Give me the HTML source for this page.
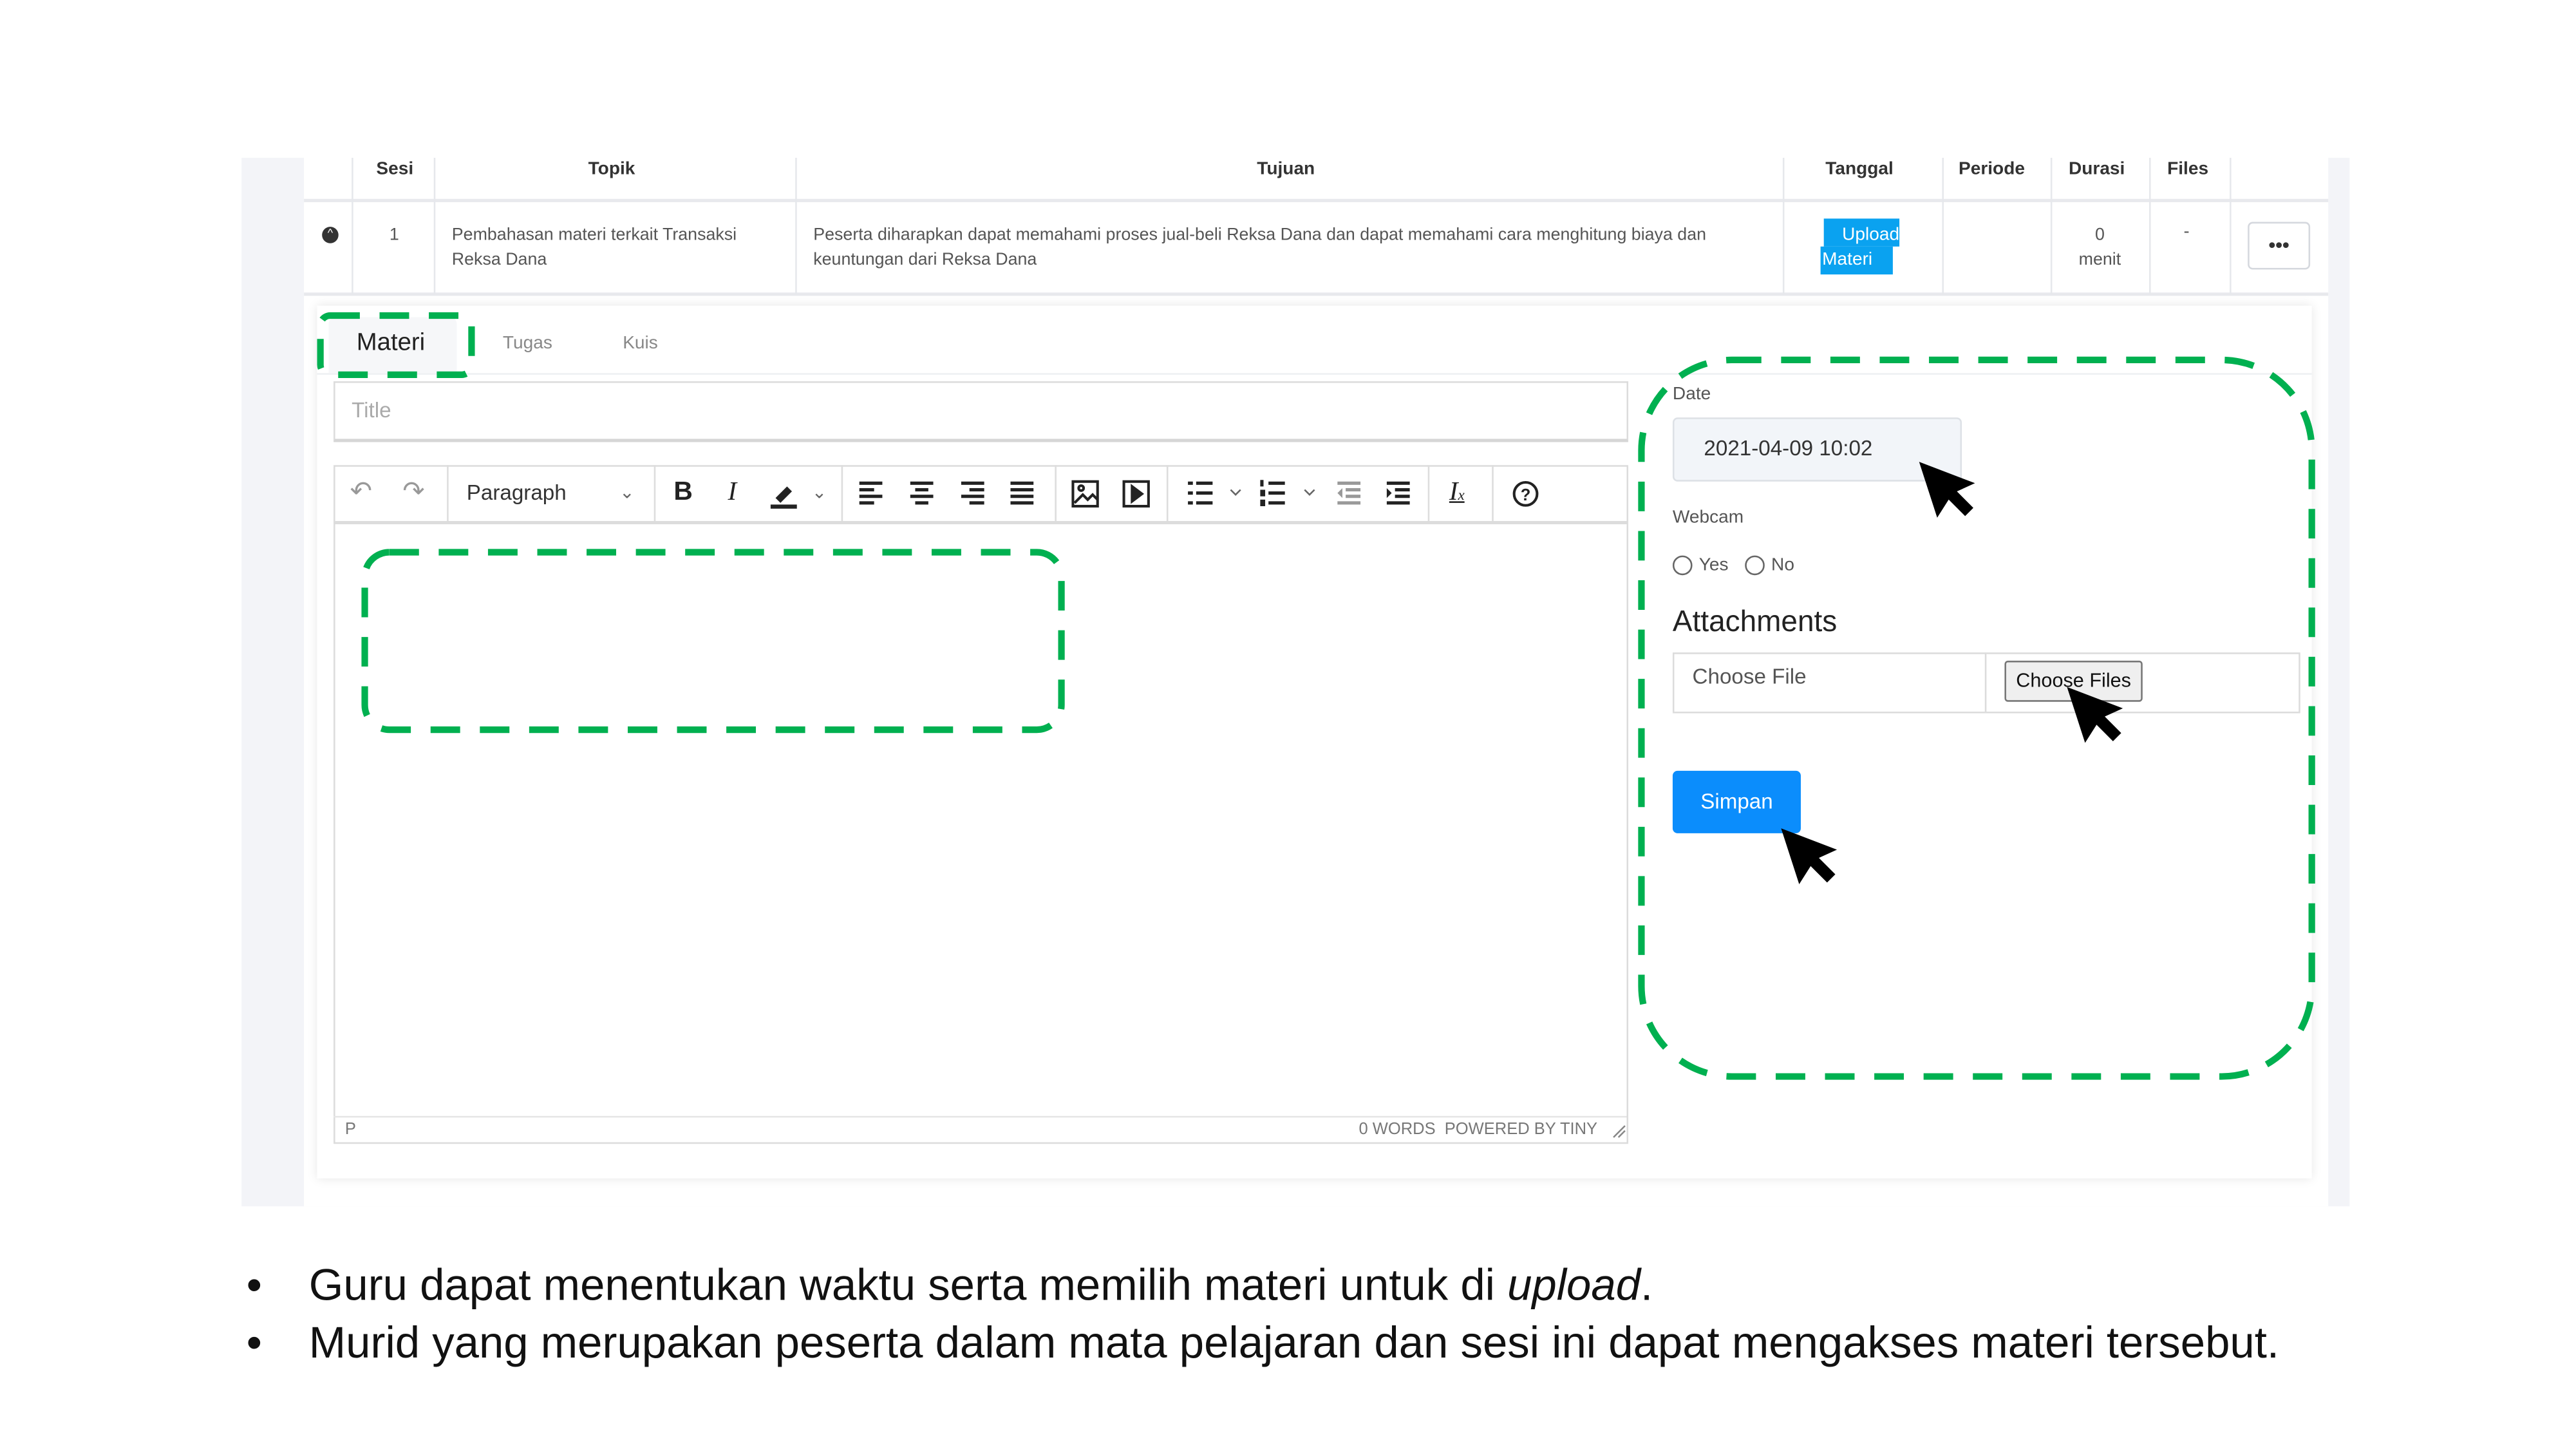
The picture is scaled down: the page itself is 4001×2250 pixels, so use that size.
<!DOCTYPE html>
<html><head><meta charset="utf-8"><style>
html,body{margin:0;padding:0;background:#fff;width:4001px;height:2250px;overflow:hidden}
#w{position:absolute;left:0;top:0;width:1560px;height:877px;transform:scale(2.552);transform-origin:0 0;font-family:"Liberation Sans",sans-serif;color:#333}
.a{position:absolute}
.th{position:absolute;top:96px;font-size:11px;font-weight:bold;color:#333;line-height:12px;padding-top:1px}
.vl{position:absolute;width:1px;background:#e6e8ec}
.t{font-size:10.5px;color:#555;line-height:15px}
.tb{position:absolute;top:283px;height:34px;font-size:16px;color:#222;line-height:34px}
.sep{position:absolute;top:283px;height:34px;width:1px;background:#ddd}
</style></head><body><div id="w">
<div class="a" style="left:147px;top:96px;width:1283px;height:638px;background:#f3f4f8"></div>
<div class="a" style="left:185px;top:96px;width:1232px;height:638px;background:#fff"></div>
<div class="a" style="left:185px;top:121px;width:1232px;height:2px;background:#e8e9ed"></div>
<div class="a" style="left:185px;top:178px;width:1232px;height:2px;background:#e8e9ed"></div>
<div class="vl" style="left:214px;top:96px;height:83px"></div>
<div class="vl" style="left:264px;top:96px;height:83px"></div>
<div class="vl" style="left:484px;top:96px;height:83px"></div>
<div class="vl" style="left:1085px;top:96px;height:83px"></div>
<div class="vl" style="left:1182px;top:96px;height:83px"></div>
<div class="vl" style="left:1248px;top:96px;height:83px"></div>
<div class="vl" style="left:1308px;top:96px;height:83px"></div>
<div class="vl" style="left:1357px;top:96px;height:83px"></div>
<div class="th" style="left:229px">Sesi</div>
<div class="th" style="left:358px">Topik</div>
<div class="th" style="left:765px">Tujuan</div>
<div class="th" style="left:1111px">Tanggal</div>
<div class="th" style="left:1192px">Periode</div>
<div class="th" style="left:1259px">Durasi</div>
<div class="th" style="left:1319px">Files</div>
<div class="a" style="left:196px;top:138px;width:10px;height:10px;border-radius:50%;background:#333;color:#fff;font-size:7px;line-height:10px;text-align:center">^</div>
<div class="a t" style="left:237px;top:136px">1</div>
<div class="a t" style="left:275px;top:136px;width:200px">Pembahasan materi terkait Transaksi Reksa Dana</div>
<div class="a t" style="left:495px;top:136px;width:580px">Peserta diharapkan dapat memahami proses jual-beli Reksa Dana dan dapat memahami cara menghitung biaya dan keuntungan dari Reksa Dana</div>
<div class="a" style="left:1110px;top:133px;width:46px;height:17px;background:#0aa2f0"></div>
<div class="a" style="left:1108px;top:150px;width:44px;height:17px;background:#0aa2f0"></div>
<div class="a" style="left:1110px;top:136px;font-size:11px;color:#fff;line-height:15px;width:46px;text-align:right">Upload</div>
<div class="a" style="left:1109px;top:151px;font-size:11px;color:#fff;line-height:15px">Materi</div>
<div class="a t" style="left:1263px;top:136px;width:30px;text-align:center">0<br>menit</div>
<div class="a t" style="left:1329px;top:134px">-</div>
<div class="a" style="left:1368px;top:135px;width:36px;height:27px;border:1px solid #d5d8de;border-radius:3px;font-size:12px;text-align:center;line-height:27px;font-weight:bold;color:#333">•••</div>
<div class="a" style="left:193px;top:186px;width:1214px;height:531px;background:#fff;box-shadow:0 0 6px rgba(0,0,0,.10)"></div>
<div class="a" style="left:193px;top:227px;width:1214px;height:1px;background:#eef0f3"></div>
<div class="a" style="left:200px;top:193px;width:78px;height:34px;background:#f6f7f9;border-radius:4px 4px 0 0"></div>
<div class="a" style="left:217px;top:200px;font-size:15px;color:#222">Materi</div>
<div class="a" style="left:306px;top:203px;font-size:11px;color:#888">Tugas</div>
<div class="a" style="left:379px;top:203px;font-size:11px;color:#888">Kuis</div>
<div class="a" style="left:203px;top:232px;width:786px;height:34px;border:1px solid #dcdcdc;border-bottom:2px solid #d6d6d6"></div>
<div class="a" style="left:214px;top:242px;font-size:13px;color:#aaa">Title</div>
<div class="a" style="left:203px;top:283px;width:786px;height:411px;border:1px solid #dcdcdc"></div>
<div class="a" style="left:203px;top:317px;width:787px;height:2px;background:#dcdcdc"></div>
<div class="a" style="left:203px;top:679px;width:787px;height:1px;background:#e5e5e5"></div>
<div class="a" style="left:210px;top:682px;font-size:10px;color:#777">P</div>
<div class="a" style="left:827px;top:682px;font-size:10px;color:#777">0 WORDS &nbsp;POWERED BY TINY</div>
<div class="sep" style="left:272px"></div><div class="sep" style="left:398px"></div><div class="sep" style="left:512px"></div><div class="sep" style="left:642px"></div><div class="sep" style="left:710px"></div><div class="sep" style="left:869px"></div><div class="sep" style="left:908px"></div>
<div class="tb" style="left:213px;color:#999">↶</div>
<div class="tb" style="left:245px;color:#999">↷</div>
<div class="tb" style="left:284px;font-size:13px;color:#333">Paragraph</div>
<div class="tb" style="left:377px;font-size:11px;color:#666">⌄</div>
<div class="tb" style="left:410px;font-weight:bold">B</div>
<div class="tb" style="left:443px;font-family:'Liberation Serif',serif;font-style:italic">I</div>
<svg class="a" style="left:468px;top:292px" width="18" height="18"><path d="M4 11 L11 4 L14 7 L7 14 Z" fill="#222"/><rect x="1" y="15" width="16" height="2.5" fill="#222"/></svg>
<div class="tb" style="left:494px;font-size:11px;color:#666">⌄</div>
<svg class="a" style="left:522px;top:292px" width="110" height="16" fill="#222">
<rect x="1" y="1" width="14" height="2"/><rect x="1" y="5" width="9" height="2"/><rect x="1" y="9" width="14" height="2"/><rect x="1" y="13" width="9" height="2"/>
<rect x="32" y="1" width="14" height="2"/><rect x="35" y="5" width="8" height="2"/><rect x="32" y="9" width="14" height="2"/><rect x="35" y="13" width="8" height="2"/>
<rect x="63" y="1" width="14" height="2"/><rect x="68" y="5" width="9" height="2"/><rect x="63" y="9" width="14" height="2"/><rect x="68" y="13" width="9" height="2"/>
<rect x="93" y="1" width="14" height="2"/><rect x="93" y="5" width="14" height="2"/><rect x="93" y="9" width="14" height="2"/><rect x="93" y="13" width="14" height="2"/></svg>
<svg class="a" style="left:652px;top:292px" width="50" height="17" fill="none" stroke="#222" stroke-width="1.6"><rect x="1" y="1" width="15" height="15"/><path d="M2 14 L7 9 L10 12 L13 9 L16 12"/><circle cx="6" cy="5" r="1.5"/><rect x="32" y="1" width="15" height="15"/><path d="M37 4 L43 8.5 L37 13 Z" fill="#222"/></svg>
<svg class="a" style="left:722px;top:292px" width="140" height="16" fill="#222">
<rect x="1" y="1" width="3" height="2"/><rect x="6" y="1" width="10" height="2"/><rect x="1" y="7" width="3" height="2"/><rect x="6" y="7" width="10" height="2"/><rect x="1" y="13" width="3" height="2"/><rect x="6" y="13" width="10" height="2"/>
<path d="M27 6 L30 9 L33 6" stroke="#666" fill="none"/>
<rect x="45" y="0" width="2" height="4"/><rect x="50" y="1" width="10" height="2"/><rect x="45" y="6" width="3" height="4"/><rect x="50" y="7" width="10" height="2"/><rect x="45" y="12" width="3" height="4"/><rect x="50" y="13" width="10" height="2"/>
<path d="M72 6 L75 9 L78 6" stroke="#666" fill="none"/>
<g fill="#999"><rect x="92" y="1" width="14" height="2"/><rect x="97" y="5" width="9" height="2"/><rect x="97" y="9" width="9" height="2"/><rect x="92" y="13" width="14" height="2"/><path d="M95 5 L92 8 L95 11Z"/></g>
<rect x="122" y="1" width="14" height="2"/><rect x="127" y="5" width="9" height="2"/><rect x="127" y="9" width="9" height="2"/><rect x="122" y="13" width="14" height="2"/><path d="M122 5 L125 8 L122 11Z"/></svg>
<div class="tb" style="left:882px;font-family:'Liberation Serif',serif;font-style:italic;text-decoration:underline">I<span style="font-size:9px">x</span></div>
<svg class="a" style="left:920px;top:292px" width="17" height="17"><circle cx="8.5" cy="8.5" r="7" fill="none" stroke="#222" stroke-width="1.6"/><text x="8.5" y="12.5" font-size="10" text-anchor="middle" font-family="Liberation Sans" font-weight="bold" fill="#222">?</text></svg>
<svg class="a" style="left:981px;top:684px" width="9" height="9"><path d="M1 8 L8 1 M4 8 L8 4" stroke="#888"/></svg>
<div class="a" style="left:1018px;top:234px;font-size:11px;color:#555">Date</div>
<div class="a" style="left:1018px;top:254px;width:174px;height:37px;background:#f2f5f9;border:1px solid #dde1e6;border-radius:3px"></div>
<div class="a" style="left:1037px;top:265px;font-size:13px;color:#333">2021-04-09 10:02</div>
<div class="a" style="left:1018px;top:309px;font-size:11px;color:#555">Webcam</div>
<div class="a" style="left:1018px;top:338px;width:10px;height:10px;border:1px solid #666;border-radius:50%"></div>
<div class="a" style="left:1034px;top:338px;font-size:11px;color:#555">Yes</div>
<div class="a" style="left:1062px;top:338px;width:10px;height:10px;border:1px solid #666;border-radius:50%"></div>
<div class="a" style="left:1078px;top:338px;font-size:11px;color:#555">No</div>
<div class="a" style="left:1018px;top:368px;font-size:18px;color:#222">Attachments</div>
<div class="a" style="left:1018px;top:397px;width:380px;height:35px;border:1px solid #dcdcdc"></div>
<div class="a" style="left:1208px;top:397px;width:1px;height:36px;background:#dcdcdc"></div>
<div class="a" style="left:1030px;top:404px;font-size:13px;color:#555">Choose File</div>
<div class="a" style="left:1220px;top:402px;width:82px;height:23px;background:#efefef;border:1px solid #777;border-radius:2px;font-size:12px;line-height:23px;text-align:center;color:#111">Choose Files</div>
<div class="a" style="left:1018px;top:469px;width:78px;height:38px;background:#0b8dfc;border-radius:3px;color:#fff;font-size:13px;line-height:38px;text-align:center">Simpan</div>
<svg class="a" style="left:0;top:0" width="1560" height="877">
<g fill="none" stroke="#00b050" stroke-width="4" stroke-dasharray="18 12">
<rect x="195" y="192" width="92" height="36" rx="6"/>
<rect x="222" y="336" width="424" height="108" rx="15"/>
<rect x="999" y="219" width="408" height="436" rx="55"/>
</g>
<g fill="#000">
<path d="M1168 281 L1179 315 L1186 304 L1196 314 L1201 309 L1191 299 L1202 294 Z"/>
<path d="M1258 418 L1269 452 L1276 441 L1286 451 L1291 446 L1281 436 L1292 431 Z"/>
<path d="M1084 504 L1095 538 L1102 527 L1112 537 L1117 532 L1107 522 L1118 517 Z"/>
</g></svg>
<div class="a" style="left:150px;top:765px;font-size:27px;color:#111;line-height:34px">•</div>
<div class="a" style="left:188px;top:765px;font-size:27px;color:#111;line-height:34px;white-space:nowrap">Guru dapat menentukan waktu serta memilih materi untuk di <i>upload</i>.</div>
<div class="a" style="left:150px;top:800px;font-size:27px;color:#111;line-height:34px">•</div>
<div class="a" style="left:188px;top:800px;font-size:27px;color:#111;line-height:34px;white-space:nowrap">Murid yang merupakan peserta dalam mata pelajaran dan sesi ini dapat mengakses materi tersebut.</div>
</div></body></html>
